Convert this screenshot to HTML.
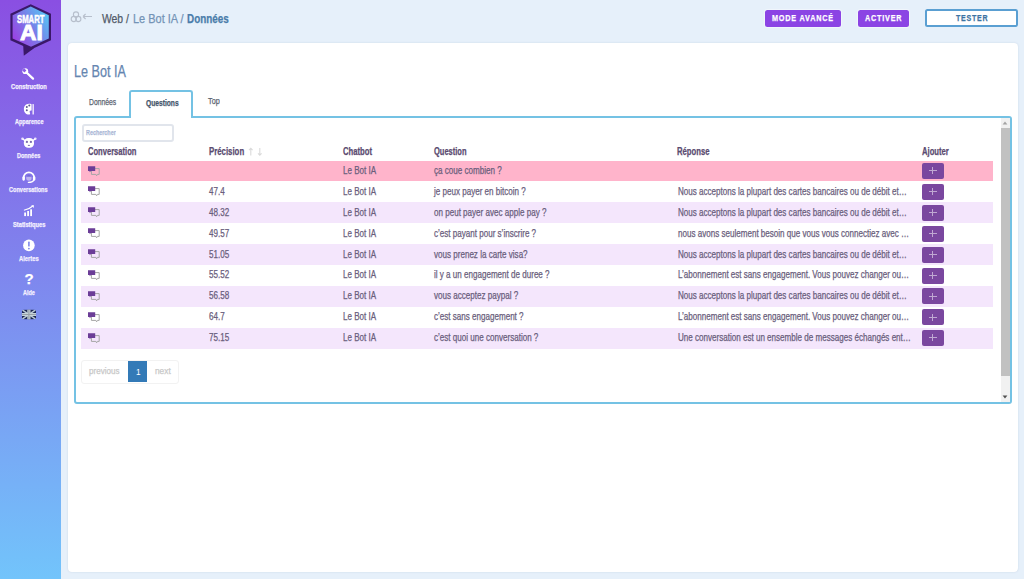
<!DOCTYPE html>
<html><head><meta charset="utf-8">
<style>
html,body{margin:0;padding:0;}
body{width:1024px;height:579px;overflow:hidden;position:relative;background:#e6f0fa;font-family:"Liberation Sans",sans-serif;}
.a{position:absolute;}
.t{position:absolute;white-space:nowrap;line-height:1;transform-origin:0 0;-webkit-text-stroke:0.25px currentColor;}
#side{left:0;top:0;width:61px;height:579px;background:linear-gradient(180deg,#8a4fe2 0%,#72c4fb 100%);}
.btnp{position:absolute;background:#8b44e4;border-radius:2.5px;box-shadow:0 0 1px 1px rgba(255,255,255,0.45);}
#card{left:68px;top:43px;width:950px;height:529px;background:#fff;border-radius:4px;box-shadow:0 0 2px rgba(120,140,170,0.25);}
#panel{left:74px;top:116px;width:934px;height:283.5px;border:2px solid #74c2e4;border-radius:3px;}
#tab{left:129px;top:90px;width:60px;height:26px;border:2px solid #74c2e4;border-bottom:none;background:#fff;border-radius:3px 3px 0 0;}
.row{position:absolute;left:81px;width:912px;}
.add{position:absolute;left:921.5px;width:22px;height:16px;background:#7a479f;border-radius:2px;}
.add:before{content:"";position:absolute;left:7px;top:7.3px;width:8px;height:1px;background:#c0a8d2;}
.add:after{content:"";position:absolute;left:10.5px;top:4.3px;width:1px;height:7px;background:#c0a8d2;}
</style></head><body>
<div id="side" class="a"></div>
<!-- logo -->
<svg class="a" style="left:0;top:0" width="61" height="60" viewBox="0 0 61 60">
<defs><linearGradient id="lg" x1="0" y1="0.85" x2="1" y2="0.15"><stop offset="0" stop-color="#9d3de3"/><stop offset="0.5" stop-color="#7a7ce8"/><stop offset="1" stop-color="#52cbf5"/></linearGradient></defs>
<path d="M23.2 45.5 L23.8 55.8 L34 48.2 Z" fill="#3a1868"/>
<path d="M30.7 4.2 L51 13.8 L51 40.2 L31 49.6 L10.4 40.2 L10.4 13.8 Z" fill="#3a1868"/>
<path d="M30.7 6.6 L48.8 15.2 L48.8 38.5 L31 46.8 L12.6 38.5 L12.6 15.2 Z" fill="url(#lg)"/>
</svg>
<!-- sidebar icons -->
<svg class="a" style="left:0;top:60px" width="61" height="270" viewBox="0 60 61 270" fill="#fff">
<!-- wrench -->
<path d="M26 72 L33 78.6" stroke="#fff" stroke-width="2.3" stroke-linecap="round"/><circle cx="25.3" cy="71.2" r="2.9"/><path d="M22.2 70.2 L24.4 72.4 L26.4 70.4 L24.2 68.2 Z" fill="#8a5ae6"/>
<!-- palette -->
<path d="M29 103.7 C25.5 103.7 23.9 106.5 23.9 109.2 C23.9 112.3 26 114.6 28.8 114.6 C30.2 114.6 30.4 113.4 29.8 112.4 C29.2 111.3 30 110.5 31 110.5 L31.6 110.5 L31.6 104.2 C30.8 103.8 29.9 103.7 29 103.7 Z"/>
<rect x="32.4" y="104" width="1.6" height="10.6" rx="0.5" fill="#e4dcfa"/>
<circle cx="26.8" cy="107.1" r="1" fill="#5d5a90"/><circle cx="29.3" cy="105.4" r="1" fill="#5d5a90"/><circle cx="26.8" cy="110.3" r="1" fill="#5d5a90"/>
<!-- robot -->
<rect x="23.9" y="137.9" width="10.1" height="9.9" rx="4.3"/>
<circle cx="22.5" cy="138.8" r="1.3" fill="#eee6fc"/><circle cx="35.3" cy="138.8" r="1.3" fill="#eee6fc"/>
<path d="M22.8 139 L25.5 141 M35 139 L32.4 141" stroke="#fff" stroke-width="1.4"/>
<circle cx="26.9" cy="141.9" r="1.15" fill="#7c6bb0"/><circle cx="30.9" cy="141.9" r="1.15" fill="#7c6bb0"/>
<ellipse cx="28.9" cy="145.3" rx="1.2" ry="0.6" fill="#7c6bb0"/>
<!-- headset -->
<path d="M23.6 178.5 L23.6 177.6 A5.3 5.3 0 0 1 34.2 177.6 L34.2 178.5" fill="none" stroke="#fff" stroke-width="1.7"/>
<rect x="22.4" y="176.3" width="2.5" height="4.4" rx="1.1"/><rect x="32.9" y="176.3" width="2.5" height="4.4" rx="1.1"/>
<circle cx="28.9" cy="178" r="2.7" fill="#bdb3f2"/>
<path d="M26.3 176.8 A2.7 2.7 0 0 1 31.5 176.8 Z" fill="#7468d8"/>
<path d="M33.6 180.4 Q32.6 182.4 28.4 182.4" fill="none" stroke="#fff" stroke-width="1.3" stroke-linecap="round"/>
<!-- stats -->
<rect x="24.2" y="212.5" width="1.8" height="3.6"/><rect x="27.2" y="211" width="1.8" height="5.1"/><rect x="30.2" y="209.3" width="1.8" height="6.8"/>
<path d="M23.9 210.2 Q29 209.5 32.8 206" fill="none" stroke="#fff" stroke-width="1.1"/>
<path d="M31.2 205.3 L34 205.2 L33.6 208 Z"/>
<!-- alert -->
<circle cx="28.9" cy="245.4" r="5.8"/>
<rect x="28.1" y="241.6" width="1.6" height="5" rx="0.6" fill="#7d86ea"/><circle cx="28.9" cy="248.6" r="0.9" fill="#7d86ea"/>
<!-- flag -->
<g transform="translate(21.8,309.6)"><clipPath id="fc"><rect width="14.2" height="9.8" rx="2.5"/></clipPath><g clip-path="url(#fc)"><rect width="14.2" height="9.8" fill="#1c2552"/>
<path d="M0 0 L14.2 9.8 M14.2 0 L0 9.8" stroke="#b9c8d2" stroke-width="1.5"/>
<path d="M7.1 0 V9.8 M0 4.9 H14.2" stroke="#c5d3d8" stroke-width="3.2"/>
<path d="M7.1 0 V9.8 M0 4.9 H14.2" stroke="#98a0a8" stroke-width="1.2"/></g></g>
</svg>
<div class="t" style="left:24.6px;top:271px;font-size:15px;font-weight:700;color:#fff;">?</div>

<!-- breadcrumb icon -->
<svg class="a" style="left:68px;top:8px" width="30" height="20" viewBox="68 8 30 20" fill="none" stroke="#b7bfcc" stroke-width="1.1">
<circle cx="76" cy="14.5" r="2.6"/><circle cx="73.8" cy="19" r="2.6"/><circle cx="78.3" cy="19" r="2.6"/>
<path d="M83 16.5 H92 M83 16.5 L85.6 14 M83 16.5 L85.6 19"/>
</svg>

<!-- buttons -->
<div class="btnp" style="left:765.3px;top:10px;width:75.7px;height:16.6px;"></div>
<div class="btnp" style="left:857.6px;top:10px;width:51.4px;height:16.6px;"></div>
<div class="a" style="left:925.3px;top:9px;width:92.4px;height:18px;box-sizing:border-box;border:2px solid #5a9fd2;background:#fff;border-radius:2.5px;"></div>

<div id="card" class="a"></div>
<div id="panel" class="a"></div>
<div id="tab" class="a"></div>

<!-- search -->
<div class="a" style="left:81.5px;top:124px;width:88.5px;height:14px;border:2px solid #e1e5ec;border-radius:3px;"></div>

<!-- rows -->
<div class="row" style="top:160.70px;height:20.1px;background:#ffb4cb;"></div>
<div class="row" style="top:202.45px;height:20.9px;background:#f4e6fc;"></div>
<div class="row" style="top:244.20px;height:20.9px;background:#f4e6fc;"></div>
<div class="row" style="top:285.95px;height:20.9px;background:#f4e6fc;"></div>
<div class="row" style="top:327.70px;height:20.9px;background:#f4e6fc;"></div>
<div class="add" style="top:163.15px;"></div>
<svg class="a" style="left:86px;top:163.50px" width="16" height="14" viewBox="0 0 16 14"><path d="M5.4 4.6 H13.2 V10.4 H11.4 L10.6 11.8 L9.9 10.4 H5.4 Z" fill="none" stroke="#a5a5a5" stroke-width="1"/><path d="M2 2.3 H9.2 V6.9 H5 L3.6 8.3 V6.9 H2 Z" fill="#6b3d97"/></svg>
<div class="add" style="top:184.02px;"></div>
<svg class="a" style="left:86px;top:184.38px" width="16" height="14" viewBox="0 0 16 14"><path d="M5.4 4.6 H13.2 V10.4 H11.4 L10.6 11.8 L9.9 10.4 H5.4 Z" fill="none" stroke="#a5a5a5" stroke-width="1"/><path d="M2 2.3 H9.2 V6.9 H5 L3.6 8.3 V6.9 H2 Z" fill="#6b3d97"/></svg>
<div class="add" style="top:204.90px;"></div>
<svg class="a" style="left:86px;top:205.25px" width="16" height="14" viewBox="0 0 16 14"><path d="M5.4 4.6 H13.2 V10.4 H11.4 L10.6 11.8 L9.9 10.4 H5.4 Z" fill="none" stroke="#a5a5a5" stroke-width="1"/><path d="M2 2.3 H9.2 V6.9 H5 L3.6 8.3 V6.9 H2 Z" fill="#6b3d97"/></svg>
<div class="add" style="top:225.77px;"></div>
<svg class="a" style="left:86px;top:226.12px" width="16" height="14" viewBox="0 0 16 14"><path d="M5.4 4.6 H13.2 V10.4 H11.4 L10.6 11.8 L9.9 10.4 H5.4 Z" fill="none" stroke="#a5a5a5" stroke-width="1"/><path d="M2 2.3 H9.2 V6.9 H5 L3.6 8.3 V6.9 H2 Z" fill="#6b3d97"/></svg>
<div class="add" style="top:246.65px;"></div>
<svg class="a" style="left:86px;top:247.00px" width="16" height="14" viewBox="0 0 16 14"><path d="M5.4 4.6 H13.2 V10.4 H11.4 L10.6 11.8 L9.9 10.4 H5.4 Z" fill="none" stroke="#a5a5a5" stroke-width="1"/><path d="M2 2.3 H9.2 V6.9 H5 L3.6 8.3 V6.9 H2 Z" fill="#6b3d97"/></svg>
<div class="add" style="top:267.52px;"></div>
<svg class="a" style="left:86px;top:267.88px" width="16" height="14" viewBox="0 0 16 14"><path d="M5.4 4.6 H13.2 V10.4 H11.4 L10.6 11.8 L9.9 10.4 H5.4 Z" fill="none" stroke="#a5a5a5" stroke-width="1"/><path d="M2 2.3 H9.2 V6.9 H5 L3.6 8.3 V6.9 H2 Z" fill="#6b3d97"/></svg>
<div class="add" style="top:288.40px;"></div>
<svg class="a" style="left:86px;top:288.75px" width="16" height="14" viewBox="0 0 16 14"><path d="M5.4 4.6 H13.2 V10.4 H11.4 L10.6 11.8 L9.9 10.4 H5.4 Z" fill="none" stroke="#a5a5a5" stroke-width="1"/><path d="M2 2.3 H9.2 V6.9 H5 L3.6 8.3 V6.9 H2 Z" fill="#6b3d97"/></svg>
<div class="add" style="top:309.27px;"></div>
<svg class="a" style="left:86px;top:309.62px" width="16" height="14" viewBox="0 0 16 14"><path d="M5.4 4.6 H13.2 V10.4 H11.4 L10.6 11.8 L9.9 10.4 H5.4 Z" fill="none" stroke="#a5a5a5" stroke-width="1"/><path d="M2 2.3 H9.2 V6.9 H5 L3.6 8.3 V6.9 H2 Z" fill="#6b3d97"/></svg>
<div class="add" style="top:330.15px;"></div>
<svg class="a" style="left:86px;top:330.50px" width="16" height="14" viewBox="0 0 16 14"><path d="M5.4 4.6 H13.2 V10.4 H11.4 L10.6 11.8 L9.9 10.4 H5.4 Z" fill="none" stroke="#a5a5a5" stroke-width="1"/><path d="M2 2.3 H9.2 V6.9 H5 L3.6 8.3 V6.9 H2 Z" fill="#6b3d97"/></svg>

<!-- sort arrows -->
<svg class="a" style="left:245px;top:144px" width="20" height="14" viewBox="245 144 20 14" fill="none" stroke="#dadada" stroke-width="1.1"><path d="M250.8 148.4 V155.6 M249 150.2 L250.8 148.4 L252.6 150.2"/><path d="M259.8 148 V155.2 M258 153.4 L259.8 155.2 L261.6 153.4"/></svg>


<!-- scrollbar -->
<div class="a" style="left:1000.5px;top:118px;width:9.5px;height:283.5px;background:#f1f1f1;"></div>
<div class="a" style="left:1000.5px;top:128px;width:9.5px;height:248px;background:#c1c1c1;"></div>
<svg class="a" style="left:1000px;top:118px" width="10" height="10"><path d="M2.6 6.6 L5 3.6 L7.4 6.6 Z" fill="#a3a3a3"/></svg>
<svg class="a" style="left:1000px;top:392px" width="10" height="10"><path d="M2.6 3.4 L5 6.4 L7.4 3.4 Z" fill="#505050"/></svg>

<!-- pagination -->
<div class="a" style="left:81.4px;top:360.2px;width:95.6px;height:21.6px;border:1px solid #f2f2f2;border-radius:3px;"></div>
<div class="a" style="left:127.6px;top:360.7px;width:19.9px;height:21px;background:#337ab7;"></div>

<div class="t g" style="left:11.20px;top:84.26px;font-size:6.54px;font-weight:700;color:#f4f0ff;transform:scaleX(0.8809);">Construction</div>
<div class="t g" style="left:14.80px;top:118.60px;font-size:6.54px;font-weight:700;color:#f4f0ff;transform:scaleX(0.8441);">Apparence</div>
<div class="t g" style="left:16.70px;top:152.94px;font-size:6.54px;font-weight:700;color:#f4f0ff;transform:scaleX(0.8444);">Données</div>
<div class="t g" style="left:9.40px;top:187.28px;font-size:6.54px;font-weight:700;color:#f4f0ff;transform:scaleX(0.8507);">Conversations</div>
<div class="t g" style="left:12.80px;top:221.62px;font-size:6.54px;font-weight:700;color:#f4f0ff;transform:scaleX(0.8749);">Statistiques</div>
<div class="t g" style="left:19.00px;top:255.96px;font-size:6.54px;font-weight:700;color:#f4f0ff;transform:scaleX(0.8891);">Alertes</div>
<div class="t g" style="left:23.20px;top:290.30px;font-size:6.54px;font-weight:700;color:#f4f0ff;transform:scaleX(0.8406);">Aide</div>
<div class="t g" style="left:101.60px;top:13.21px;font-size:12.50px;font-weight:400;color:#525a68;transform:scaleX(0.8297);">Web /</div>
<div class="t g" style="left:132.60px;top:13.21px;font-size:12.50px;font-weight:400;color:#7393b6;transform:scaleX(0.8771);">Le Bot IA /</div>
<div class="t g" style="left:187.30px;top:13.21px;font-size:12.50px;font-weight:700;color:#4a7daa;transform:scaleX(0.7898);">Données</div>
<div class="t g" style="left:17.20px;top:13.84px;font-size:11.05px;font-weight:700;color:#fff;transform:scaleX(0.7001);-webkit-text-stroke:0.5px #fff;">SMART</div>
<div class="t g" style="left:19.60px;top:22.33px;font-size:21.22px;font-weight:700;color:#fff;transform:scaleX(1.0698);-webkit-text-stroke:0.9px #fff;">AI</div>
<div class="t g" style="left:772.40px;top:13.57px;font-size:9.01px;font-weight:700;color:#fff;transform:scaleX(0.8068);letter-spacing:1px;">MODE AVANCÉ</div>
<div class="t g" style="left:865.00px;top:13.57px;font-size:9.01px;font-weight:700;color:#fff;transform:scaleX(0.8040);letter-spacing:1px;">ACTIVER</div>
<div class="t g" style="left:956.00px;top:14.22px;font-size:9.30px;font-weight:700;color:#3d74a3;transform:scaleX(0.7590);letter-spacing:1px;">TESTER</div>
<div class="t g" style="left:74.40px;top:62.81px;font-size:16.28px;font-weight:400;color:#6585b0;transform:scaleX(0.7755);">Le Bot IA</div>
<div class="t g" style="left:89.10px;top:98.07px;font-size:9.01px;font-weight:400;color:#5b6370;transform:scaleX(0.7521);">Données</div>
<div class="t g" style="left:145.80px;top:99.14px;font-size:8.58px;font-weight:700;color:#45566b;transform:scaleX(0.7771);">Questions</div>
<div class="t g" style="left:208.00px;top:97.32px;font-size:9.30px;font-weight:400;color:#5b6370;transform:scaleX(0.7800);">Top</div>
<div class="t g" style="left:88.10px;top:146.61px;font-size:10.03px;font-weight:700;color:#5a4b70;transform:scaleX(0.7561);">Conversation</div>
<div class="t g" style="left:208.60px;top:146.61px;font-size:10.03px;font-weight:700;color:#5a4b70;transform:scaleX(0.7795);">Précision</div>
<div class="t g" style="left:343.00px;top:146.61px;font-size:10.03px;font-weight:700;color:#5a4b70;transform:scaleX(0.7666);">Chatbot</div>
<div class="t g" style="left:433.50px;top:146.61px;font-size:10.03px;font-weight:700;color:#5a4b70;transform:scaleX(0.7487);">Question</div>
<div class="t g" style="left:677.00px;top:146.61px;font-size:10.03px;font-weight:700;color:#5a4b70;transform:scaleX(0.7681);">Réponse</div>
<div class="t g" style="left:921.50px;top:146.61px;font-size:10.03px;font-weight:700;color:#5a4b70;transform:scaleX(0.7643);">Ajouter</div>
<div class="t g" style="left:343.00px;top:166.01px;font-size:10.03px;font-weight:400;color:#6a5e7c;transform:scaleX(0.8044);">Le Bot IA</div>
<div class="t g" style="left:433.50px;top:166.01px;font-size:10.03px;font-weight:400;color:#6a5e7c;transform:scaleX(0.8044);">ça coue combien ?</div>
<div class="t g" style="left:209.00px;top:186.88px;font-size:10.03px;font-weight:400;color:#6a5e7c;transform:scaleX(0.8044);">47.4</div>
<div class="t g" style="left:343.00px;top:186.88px;font-size:10.03px;font-weight:400;color:#6a5e7c;transform:scaleX(0.8044);">Le Bot IA</div>
<div class="t g" style="left:433.50px;top:186.88px;font-size:10.03px;font-weight:400;color:#6a5e7c;transform:scaleX(0.8044);">je peux payer en bitcoin ?</div>
<div class="t g" style="left:677.80px;top:186.88px;font-size:10.03px;font-weight:400;color:#6a5e7c;transform:scaleX(0.8044);">Nous acceptons la plupart des cartes bancaires ou de débit et…</div>
<div class="t g" style="left:209.00px;top:207.76px;font-size:10.03px;font-weight:400;color:#6a5e7c;transform:scaleX(0.8044);">48.32</div>
<div class="t g" style="left:343.00px;top:207.76px;font-size:10.03px;font-weight:400;color:#6a5e7c;transform:scaleX(0.8044);">Le Bot IA</div>
<div class="t g" style="left:433.50px;top:207.76px;font-size:10.03px;font-weight:400;color:#6a5e7c;transform:scaleX(0.8044);">on peut payer avec apple pay ?</div>
<div class="t g" style="left:677.80px;top:207.76px;font-size:10.03px;font-weight:400;color:#6a5e7c;transform:scaleX(0.8044);">Nous acceptons la plupart des cartes bancaires ou de débit et…</div>
<div class="t g" style="left:209.00px;top:228.63px;font-size:10.03px;font-weight:400;color:#6a5e7c;transform:scaleX(0.8044);">49.57</div>
<div class="t g" style="left:343.00px;top:228.63px;font-size:10.03px;font-weight:400;color:#6a5e7c;transform:scaleX(0.8044);">Le Bot IA</div>
<div class="t g" style="left:433.50px;top:228.63px;font-size:10.03px;font-weight:400;color:#6a5e7c;transform:scaleX(0.8044);">c’est payant pour s’inscrire ?</div>
<div class="t g" style="left:677.80px;top:228.63px;font-size:10.03px;font-weight:400;color:#6a5e7c;transform:scaleX(0.8044);">nous avons seulement besoin que vous vous connectiez avec …</div>
<div class="t g" style="left:209.00px;top:249.51px;font-size:10.03px;font-weight:400;color:#6a5e7c;transform:scaleX(0.8044);">51.05</div>
<div class="t g" style="left:343.00px;top:249.51px;font-size:10.03px;font-weight:400;color:#6a5e7c;transform:scaleX(0.8044);">Le Bot IA</div>
<div class="t g" style="left:433.50px;top:249.51px;font-size:10.03px;font-weight:400;color:#6a5e7c;transform:scaleX(0.8044);">vous prenez la carte visa?</div>
<div class="t g" style="left:677.80px;top:249.51px;font-size:10.03px;font-weight:400;color:#6a5e7c;transform:scaleX(0.8044);">Nous acceptons la plupart des cartes bancaires ou de débit et…</div>
<div class="t g" style="left:209.00px;top:270.38px;font-size:10.03px;font-weight:400;color:#6a5e7c;transform:scaleX(0.8044);">55.52</div>
<div class="t g" style="left:343.00px;top:270.38px;font-size:10.03px;font-weight:400;color:#6a5e7c;transform:scaleX(0.8044);">Le Bot IA</div>
<div class="t g" style="left:433.50px;top:270.38px;font-size:10.03px;font-weight:400;color:#6a5e7c;transform:scaleX(0.8044);">il y a un engagement de duree ?</div>
<div class="t g" style="left:677.80px;top:270.38px;font-size:10.03px;font-weight:400;color:#6a5e7c;transform:scaleX(0.8044);">L’abonnement est sans engagement. Vous pouvez changer ou…</div>
<div class="t g" style="left:209.00px;top:291.26px;font-size:10.03px;font-weight:400;color:#6a5e7c;transform:scaleX(0.8044);">56.58</div>
<div class="t g" style="left:343.00px;top:291.26px;font-size:10.03px;font-weight:400;color:#6a5e7c;transform:scaleX(0.8044);">Le Bot IA</div>
<div class="t g" style="left:433.50px;top:291.26px;font-size:10.03px;font-weight:400;color:#6a5e7c;transform:scaleX(0.8044);">vous acceptez paypal ?</div>
<div class="t g" style="left:677.80px;top:291.26px;font-size:10.03px;font-weight:400;color:#6a5e7c;transform:scaleX(0.8044);">Nous acceptons la plupart des cartes bancaires ou de débit et…</div>
<div class="t g" style="left:209.00px;top:312.13px;font-size:10.03px;font-weight:400;color:#6a5e7c;transform:scaleX(0.8044);">64.7</div>
<div class="t g" style="left:343.00px;top:312.13px;font-size:10.03px;font-weight:400;color:#6a5e7c;transform:scaleX(0.8044);">Le Bot IA</div>
<div class="t g" style="left:433.50px;top:312.13px;font-size:10.03px;font-weight:400;color:#6a5e7c;transform:scaleX(0.8044);">c’est sans engagement ?</div>
<div class="t g" style="left:677.80px;top:312.13px;font-size:10.03px;font-weight:400;color:#6a5e7c;transform:scaleX(0.8044);">L’abonnement est sans engagement. Vous pouvez changer ou…</div>
<div class="t g" style="left:209.00px;top:333.01px;font-size:10.03px;font-weight:400;color:#6a5e7c;transform:scaleX(0.8044);">75.15</div>
<div class="t g" style="left:343.00px;top:333.01px;font-size:10.03px;font-weight:400;color:#6a5e7c;transform:scaleX(0.8044);">Le Bot IA</div>
<div class="t g" style="left:433.50px;top:333.01px;font-size:10.03px;font-weight:400;color:#6a5e7c;transform:scaleX(0.8044);">c’est quoi une conversation ?</div>
<div class="t g" style="left:677.80px;top:333.01px;font-size:10.03px;font-weight:400;color:#6a5e7c;transform:scaleX(0.8044);">Une conversation est un ensemble de messages échangés ent…</div>
<div class="t g" style="left:89.30px;top:367.22px;font-size:8.60px;font-weight:400;color:#c8c8c8;transform:scaleX(0.9389);">previous</div>
<div class="t g" style="left:136.00px;top:366.63px;font-size:9.88px;font-weight:400;color:#fff;transform:scaleX(0.8364);-webkit-text-stroke:0;">1</div>
<div class="t g" style="left:155.00px;top:367.22px;font-size:8.60px;font-weight:400;color:#c8c8c8;transform:scaleX(0.9662);">next</div>
<div class="t g" style="left:85.80px;top:128.73px;font-size:7.99px;font-weight:700;color:#aab7d6;transform:scaleX(0.6780);">Rechercher</div>
</body></html>
